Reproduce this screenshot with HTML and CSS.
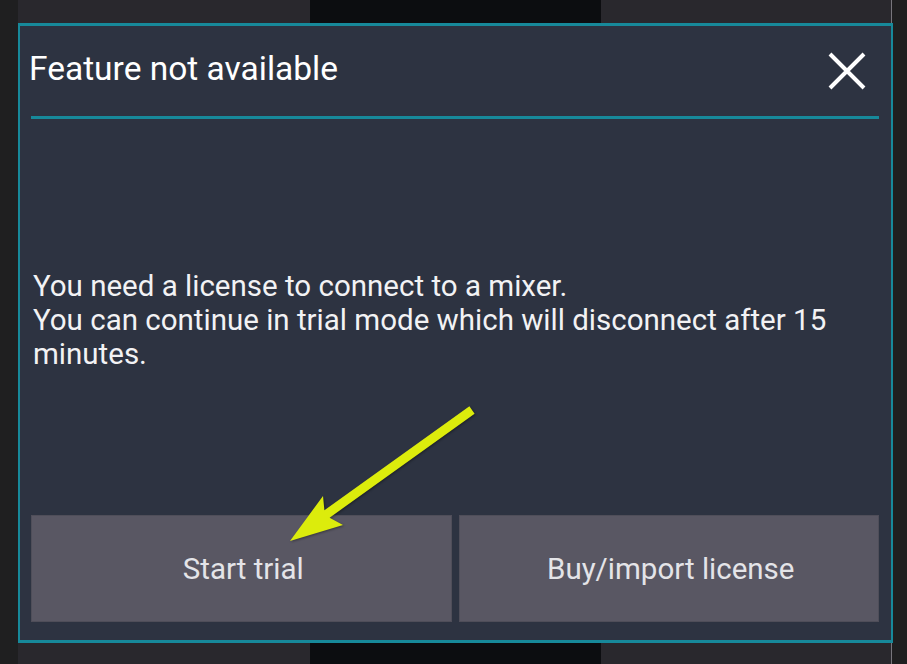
FILE: index.html
```html
<!DOCTYPE html>
<html lang="en">
<head>
    <meta charset="UTF-8">
    <title>Feature not available</title>
    <link rel="stylesheet" href="styles.css">
</head>
<body>
    <!-- Backdrop panels behind the dialog -->
    <div class="backdrop">
        <div class="strip"></div>
        <div class="panel"></div>
        <div class="panel dark"></div>
        <div class="panel edge"></div>
        <div class="strip"></div>
    </div>

    <div class="dialog">
        <div class="dialogHeader">
            <h1 class="dialogTitle">Feature not available</h1>
            <button class="closeBtn" aria-label="Close">
                <svg width="38" height="38" viewBox="0 0 38 38">
                    <path d="M2 2 L36 36 M36 2 L2 36" stroke="#ffffff" stroke-width="4" fill="none"/>
                </svg>
            </button>
        </div>
        <div class="dialogBody">
            <p>You need a license to connect to a mixer.<br>
            You can continue in trial mode which will disconnect after 15 minutes.</p>
        </div>
        <div class="dialogButtons">
            <button class="actionBtn">Start trial</button>
            <button class="actionBtn">Buy/import license</button>
        </div>
    </div>

    <!-- Annotation arrow -->
    <svg class="arrow" width="907" height="664" viewBox="0 0 907 664">
        <polygon points="469.4,406.3 474.6,413.7 329.6,517.7 343,525 290,541 323,496 324.4,510.3" fill="#dcec0c"/>
    </svg>
</body>
</html>
```

FILE: styles.css
```css
body {
    margin: 0;
    width: 907px;
    height: 664px;
    overflow: hidden;
    font-family: Roboto, "Liberation Sans", sans-serif;
    background: #1f1f1f;
    position: relative;
}

.backdrop {
    display: flex;
    height: 664px;
}

.strip {
    width: 18px;
    background: #1f1f20;
}

.strip:last-child {
    flex: 1;
}

.panel {
    width: 292px;
    background: #29282d;
}

.panel.dark {
    width: 291px;
    background: #0c0d10;
}

.panel.edge {
    width: 290px;
    border-right: 1px solid #77767c;
}

.dialog {
    position: absolute;
    left: 18px;
    top: 23px;
    width: 875px;
    height: 620px;
    box-sizing: border-box;
    border-style: solid;
    border-color: #17899a;
    border-width: 3px 2px;
    background: #2d3341;
    display: flex;
    flex-direction: column;
    padding: 0 12px 18px 11px;
}

.dialogHeader {
    display: flex;
    align-items: center;
    justify-content: space-between;
    height: 90px;
    border-bottom: 3px solid #17899a;
}

.dialogTitle {
    margin: 0 0 6px -2px;
    font-size: 33.5px;
    font-weight: normal;
    color: #ffffff;
}

.closeBtn {
    background: none;
    border: none;
    padding: 0;
    margin-right: 13px;
    display: flex;
}

.dialogBody {
    flex: 1;
    display: flex;
    align-items: center;
    padding-top: 5px;
}

.dialogBody p {
    margin: 0 0 0 2px;
    font-size: 29.5px;
    line-height: 34px;
    color: #f2f2f4;
}

.dialogButtons {
    display: flex;
    gap: 7px;
    height: 107px;
}

.actionBtn {
    flex: 1;
    background: #595763;
    border: 1px solid #4f4e59;
    color: #e4e4e8;
    font-family: Roboto, "Liberation Sans", sans-serif;
    font-size: 29.5px;
    padding: 0 6px 0 10px;
}

.arrow {
    position: absolute;
    left: 0;
    top: 0;
    filter: drop-shadow(1px 1px 1px rgba(0, 0, 0, 0.35));
}
```
